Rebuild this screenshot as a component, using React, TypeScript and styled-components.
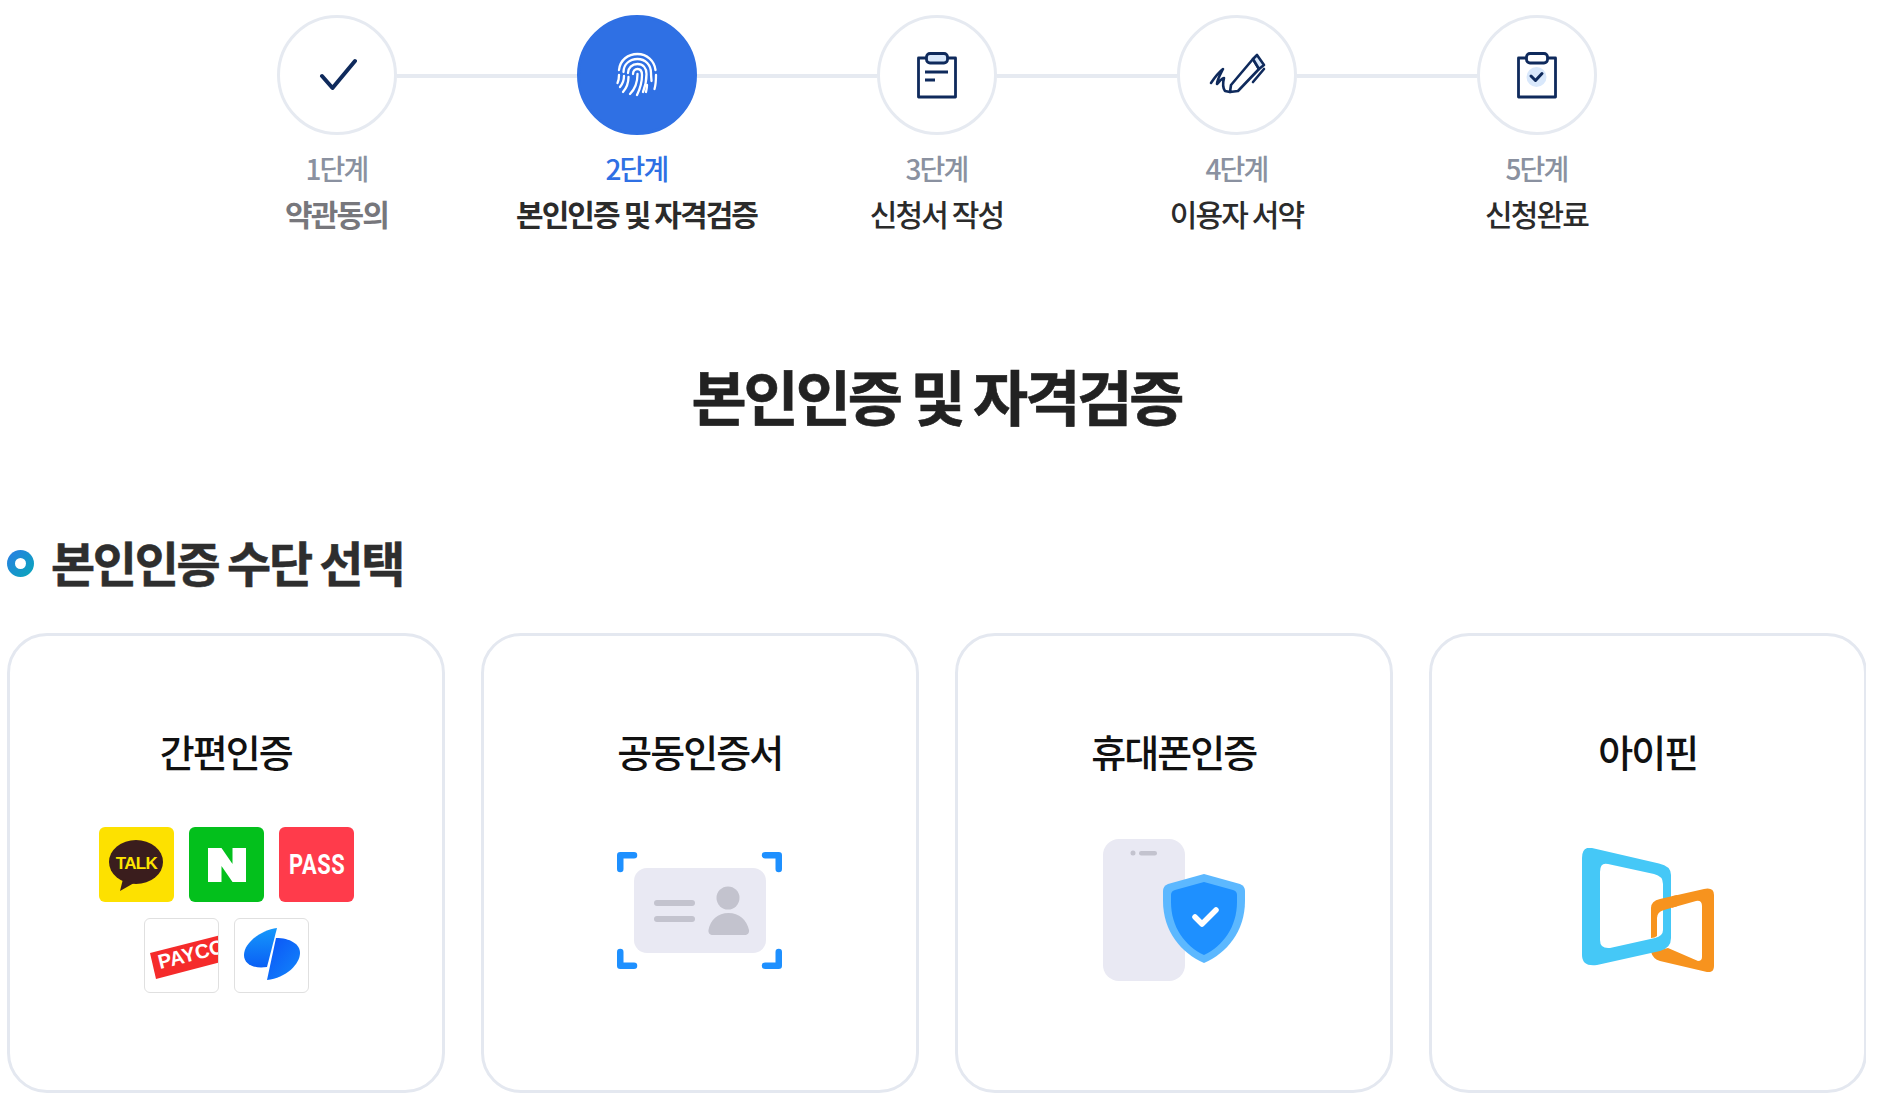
import React from "react";
import styled, { createGlobalStyle } from "styled-components";

const GlobalStyle = createGlobalStyle`
  html, body {
    margin: 0;
    padding: 0;
    background: #fff;
  }
  body {
    font-family: "Noto Sans CJK KR", "Noto Sans", sans-serif;
  }
`;

const Page = styled.div`
  width: 1859px;
  height: 1106px;
  margin-left: 7px;
  overflow: hidden;
`;

const Steps = styled.ol`
  display: grid;
  grid-template-columns: repeat(5, 300px);
  justify-content: center;
  list-style: none;
  margin: 0;
  padding: 15px 0 0;
`;

const Step = styled.li`
  display: flex;
  flex-direction: column;
  align-items: center;
`;

const CircleRow = styled.div`
  display: flex;
  align-items: center;
  width: 100%;
`;

const Connector = styled.span<{ $hidden?: boolean }>`
  flex: 1;
  height: 4px;
  margin-top: 2px;
  background: ${(p) => (p.$hidden ? "transparent" : "#e6eaf1")};
`;

const Circle = styled.div<{ $active?: boolean }>`
  display: flex;
  align-items: center;
  justify-content: center;
  box-sizing: border-box;
  width: 120px;
  height: 120px;
  border-radius: 50%;
  border: 3px solid ${(p) => (p.$active ? "#2f70e4" : "#e6eaf1")};
  background: ${(p) => (p.$active ? "#2f70e4" : "#fff")};
`;

const StepNumber = styled.div<{ $active?: boolean }>`
  margin-top: 14px;
  font-size: 28px;
  line-height: 38px;
  font-weight: 500;
  letter-spacing: -1.8px;
  color: ${(p) => (p.$active ? "#2f70e4" : "#8a91a0")};
`;

const StepName = styled.div<{ $muted?: boolean; $strong?: boolean }>`
  margin-top: 7px;
  font-size: 30px;
  line-height: 38px;
  font-weight: ${(p) => (p.$strong ? 700 : 500)};
  letter-spacing: -1.9px;
  color: ${(p) => (p.$muted ? "#77777c" : "#2b2b2b")};
`;

const Title = styled.h1`
  margin: 123px 0 0;
  text-align: center;
  font-size: 60px;
  line-height: 80px;
  font-weight: 700;
  letter-spacing: -3.1px;
  -webkit-text-stroke: 0.6px #222;
  color: #222;
`;

const SectionHead = styled.h2`
  display: flex;
  align-items: center;
  gap: 17px;
  margin: 93px 0 0;
  font-size: 48px;
  line-height: 66px;
  font-weight: 700;
  letter-spacing: -2.3px;
  -webkit-text-stroke: 0.5px #2e2e2e;
  color: #2e2e2e;
`;

const Dot = styled.span`
  display: flex;
  align-items: center;
  justify-content: center;
  width: 27px;
  height: 27px;
  margin-top: 4px;
  border-radius: 50%;
  background: linear-gradient(135deg, #2a7de6, #08a8b8);

  &::after {
    content: "";
    width: 11px;
    height: 11px;
    border-radius: 50%;
    background: #fff;
  }
`;

const Cards = styled.div`
  display: grid;
  grid-template-columns: repeat(4, 437.5px);
  gap: 36.5px;
  margin-top: 39px;
`;

const Card = styled.button`
  display: flex;
  flex-direction: column;
  align-items: center;
  box-sizing: border-box;
  height: 460px;
  padding: 87px 0 0;
  border: 3px solid #e4e8f0;
  border-radius: 40px;
  background: #fff;
  font-family: inherit;
`;

const CardTitle = styled.div`
  font-size: 38px;
  line-height: 56px;
  font-weight: 500;
  letter-spacing: -2px;
  color: #111;
`;

const CardArt = styled.div`
  display: flex;
  align-items: center;
  justify-content: center;
  height: 170px;
  margin-top: 46px;

  svg {
    display: block;
  }
`;

const LogoGrid = styled.div`
  display: flex;
  flex-wrap: wrap;
  justify-content: center;
  gap: 16px 15px;
  width: 260px;
  margin-left: 2px;
`;

const LogoTile = styled.div<{ $bg?: string; $outlined?: boolean }>`
  display: flex;
  align-items: center;
  justify-content: center;
  box-sizing: border-box;
  width: 75px;
  height: 75px;
  overflow: hidden;
  border-radius: 6px;
  background: ${(p) => p.$bg ?? "#fff"};
  border: ${(p) => (p.$outlined ? "1px solid #e0e0e0" : "none")};
`;

const navy = "#0f2a5c";

const CheckIcon = () => (
  <svg width="40" height="34" viewBox="-2 0 40 34" fill="none">
    <path d="M3 18 13.500 30 36 3" stroke={navy} strokeWidth="4" strokeLinecap="round" strokeLinejoin="round" />
  </svg>
);

const FingerprintIcon = () => (
  <svg width="60" height="60" viewBox="0 0 60 60" fill="none" stroke="#fff" strokeWidth="2.3" strokeLinecap="round">
    <path d="M12 25C13 15 21 9 30.500 9C40 9 47.500 16 48.500 25" />
    <path d="M16.500 27C16.500 19 23 14 30.500 14C38.500 14 44 20 44 28C44 32 44.500 34 44.500 36" />
    <path d="M21 28C21 23 25 19 30.500 19C36 19 39.500 23 39.500 29C39.500 36 38 42 36 47" />
    <path d="M26 29C26 26 28 24 30.500 24C33 24 35 26 35 30C35 38 33 44 30 50" />
    <path d="M30.500 29C30.500 37 28 44 23 49" />
    <path d="M21.500 32C21.500 38 19.500 43 16 47" />
    <path d="M17 31C17 36 15.500 39 13 42" />
    <path d="M12 30C12 34 11.500 36 10.500 38" />
    <path d="M49 30C49 35 49 39 47.500 44" />
    <path d="M40 40C40 43 39.500 45 39 47" />
  </svg>
);

const Clipboard = ({ children, clipFill }: { children?: React.ReactNode; clipFill?: string }) => (
  <svg width="60" height="60" viewBox="0 0 60 60" fill="none">
    <path d="M19 13H11.500v39h37V13H41" stroke={navy} strokeWidth="2.8" strokeLinejoin="round" />
    <rect x="19.500" y="8.500" width="21" height="9.500" rx="3.500" fill={clipFill ?? "#fff"} stroke={navy} strokeWidth="2.8" />
    {children}
  </svg>
);

const PenIcon = () => (
  <svg width="60" height="60" viewBox="0 0 60 60" fill="none" stroke={navy} strokeWidth="2.6" strokeLinecap="round" strokeLinejoin="round">
    <path d="M46 14 24 40l-1 7 8-1 21-22z" fill="#fff" />
    <path d="M46 14l4-4 7 10-5 4z" fill="#d9e8fb" />
    <path d="M57 24 46 37" />
    <path d="M4 38C8 32 12 27 16 24C13 30 10 35 10 39C13 36 15 33 17 33C16 37 15 42 18 46L23 47" />
  </svg>
);

const CertIcon = () => (
  <svg width="165" height="117" viewBox="0 0 165 117" fill="none">
    <rect x="17" y="16" width="132" height="85" rx="13" fill="#e9e9f3" />
    <rect x="37" y="48" width="41" height="6" rx="3" fill="#c3c3ce" />
    <rect x="37" y="64" width="41" height="6" rx="3" fill="#c3c3ce" />
    <circle cx="111" cy="46" r="11.500" fill="#c3c3ce" />
    <path d="M96 83c-3 0-5-2-4.500-5C93 68 101 61 111.500 61S130 68 132 78c.5 3-1.500 5-4.500 5z" fill="#c3c3ce" />
    <g stroke="#1e90ff" strokeWidth="6.500" strokeLinecap="round" strokeLinejoin="round">
      <path d="M3.250 17V3.250H17" />
      <path d="M148 3.250h13.750V17" />
      <path d="M3.250 100v13.750H17" />
      <path d="M148 113.750h13.750V100" />
    </g>
  </svg>
);

const PhoneIcon = () => (
  <svg width="142" height="142" viewBox="0 0 142 142" fill="none">
    <rect x="0" y="0" width="82" height="142" rx="16" fill="#e9e9f3" />
    <circle cx="30" cy="14" r="2.500" fill="#c3c3ce" />
    <rect x="36" y="12" width="18" height="4.500" rx="2.250" fill="#c3c3ce" />
    <path d="M101 35 65 45Q60 47 60 52V62C60 92 78 114 101 124C124 114 142 92 142 62V52Q142 47 137 45Z" fill="#5cb8ff" />
    <path d="M101 43 72 51Q68 52 68 56V63C68 88 82 107 101 116C120 107 134 88 134 63V56Q134 52 130 51Z" fill="#1e90ff" />
    <path d="M92 78 99 85 113 71" stroke="#fff" strokeWidth="5.500" strokeLinecap="round" strokeLinejoin="round" />
  </svg>
);

const IpinIcon = () => (
  <svg width="132" height="124" viewBox="0 0 132 124" fill="none">
    <path d="M122 41Q132 39 132 47V118Q132 125 125 124L78 113Q71 111 69 104L86 100 116 113Q120 113 120 109V58Q120 52 114 53L90 59.750V48.300z" fill="#f7931e" />
    <path fillRule="evenodd" d="M10 0 77 15.500Q89 18 89 27V90Q89 100 78 103L15 117Q0 119 0 107V10Q0-2 10 0ZM26 16 72 26Q81 28 81 36V82Q81 88 73 90L28 100Q18 101 18 92V24Q18 14 26 16Z" fill="#45c8f7" />
    <path d="M69 90V60Q69 53 78 51L95 47.100V58.300L82 62Q75 64 75 70V88Q73 90 69 90Z" fill="#f7931e" />
  </svg>
);

const TalkLogo = () => (
  <svg width="75" height="75" viewBox="0 0 75 75">
    <ellipse cx="37" cy="35" rx="27" ry="22" fill="#3a1d1d" />
    <path d="M24 52 21 64 35 56z" fill="#3a1d1d" />
    <text x="37.500" y="41.500" textAnchor="middle" fontFamily="Liberation Sans, sans-serif" fontWeight="700" fontSize="17" letterSpacing="-0.7" fill="#fde500">TALK</text>
  </svg>
);

const NaverLogo = () => (
  <svg width="38" height="34" viewBox="0 0 38 34">
    <path d="M0 0h13.500l11 16V0H38v34H24.500l-11-16v16H0z" fill="#fff" />
  </svg>
);

const PassText = styled.span`
  font-family: "Roboto", "Liberation Sans", sans-serif;
  font-weight: 700;
  font-size: 28px;
  letter-spacing: 0.8px;
  color: #fff;
  transform: scaleX(0.78);
`;

const PaycoLogo = () => (
  <svg width="73" height="73" viewBox="0 0 73 73">
    <path d="M5 34 80 15V42L11 60z" fill="#f52b2b" />
    <text x="15" y="50" transform="rotate(-14 15 50)" fontFamily="Liberation Sans, sans-serif" fontWeight="700" fontSize="20" fill="#fff">PAYCO</text>
  </svg>
);

const TossLogo = () => (
  <svg width="73" height="73" viewBox="0 0 73 73">
    <defs>
      <linearGradient id="tossLeft" x1="0" y1="0" x2="0" y2="1">
        <stop offset="0" stopColor="#1598fb" />
        <stop offset="1" stopColor="#0a5ff5" />
      </linearGradient>
      <linearGradient id="tossRight" x1="0" y1="0" x2="1" y2="1">
        <stop offset="0" stopColor="#0b52f7" />
        <stop offset="1" stopColor="#1288fa" />
      </linearGradient>
    </defs>
    <path d="M42 9 32 48C20 50 9 46 9 36c0-12 17-25 33-27z" fill="url(#tossLeft)" />
    <path d="M41 19c14 0 24 6 24 15 0 11-14 25-33 27z" fill="url(#tossRight)" />
  </svg>
);

const steps = [
  { no: "1단계", name: "약관동의", icon: <CheckIcon />, muted: true, strong: true },
  { no: "2단계", name: "본인인증 및 자격검증", icon: <FingerprintIcon />, active: true, strong: true },
  {
    no: "3단계",
    name: "신청서 작성",
    icon: (
      <Clipboard clipFill="#d9e8fb">
        <path d="M18 27h23M18 35h10" stroke={navy} strokeWidth="2.8" />
      </Clipboard>
    ),
  },
  { no: "4단계", name: "이용자 서약", icon: <PenIcon /> },
  {
    no: "5단계",
    name: "신청완료",
    icon: (
      <Clipboard>
        <circle cx="29.500" cy="32" r="10" fill="#d9e8fb" />
        <path d="M24 31l4.500 4.500L35 28.500" stroke={navy} strokeWidth="3" strokeLinecap="round" strokeLinejoin="round" />
      </Clipboard>
    ),
  },
];

export default function App() {
  return (
    <Page>
      <GlobalStyle />
      <Steps>
        {steps.map((s, i) => (
          <Step key={s.no}>
            <CircleRow>
              <Connector $hidden={i === 0} />
              <Circle $active={s.active}>{s.icon}</Circle>
              <Connector $hidden={i === steps.length - 1} />
            </CircleRow>
            <StepNumber $active={s.active}>{s.no}</StepNumber>
            <StepName $muted={s.muted} $strong={s.strong}>{s.name}</StepName>
          </Step>
        ))}
      </Steps>

      <Title>본인인증 및 자격검증</Title>

      <SectionHead>
        <Dot />
        본인인증 수단 선택
      </SectionHead>

      <Cards>
        <Card>
          <CardTitle>간편인증</CardTitle>
          <CardArt>
            <LogoGrid>
              <LogoTile $bg="#fde100"><TalkLogo /></LogoTile>
              <LogoTile $bg="#03c01c"><NaverLogo /></LogoTile>
              <LogoTile $bg="#ff3b4b"><PassText>PASS</PassText></LogoTile>
              <LogoTile $outlined><PaycoLogo /></LogoTile>
              <LogoTile $outlined><TossLogo /></LogoTile>
            </LogoGrid>
          </CardArt>
        </Card>
        <Card>
          <CardTitle>공동인증서</CardTitle>
          <CardArt><CertIcon /></CardArt>
        </Card>
        <Card>
          <CardTitle>휴대폰인증</CardTitle>
          <CardArt><PhoneIcon /></CardArt>
        </Card>
        <Card>
          <CardTitle>아이핀</CardTitle>
          <CardArt><IpinIcon /></CardArt>
        </Card>
      </Cards>
    </Page>
  );
}
